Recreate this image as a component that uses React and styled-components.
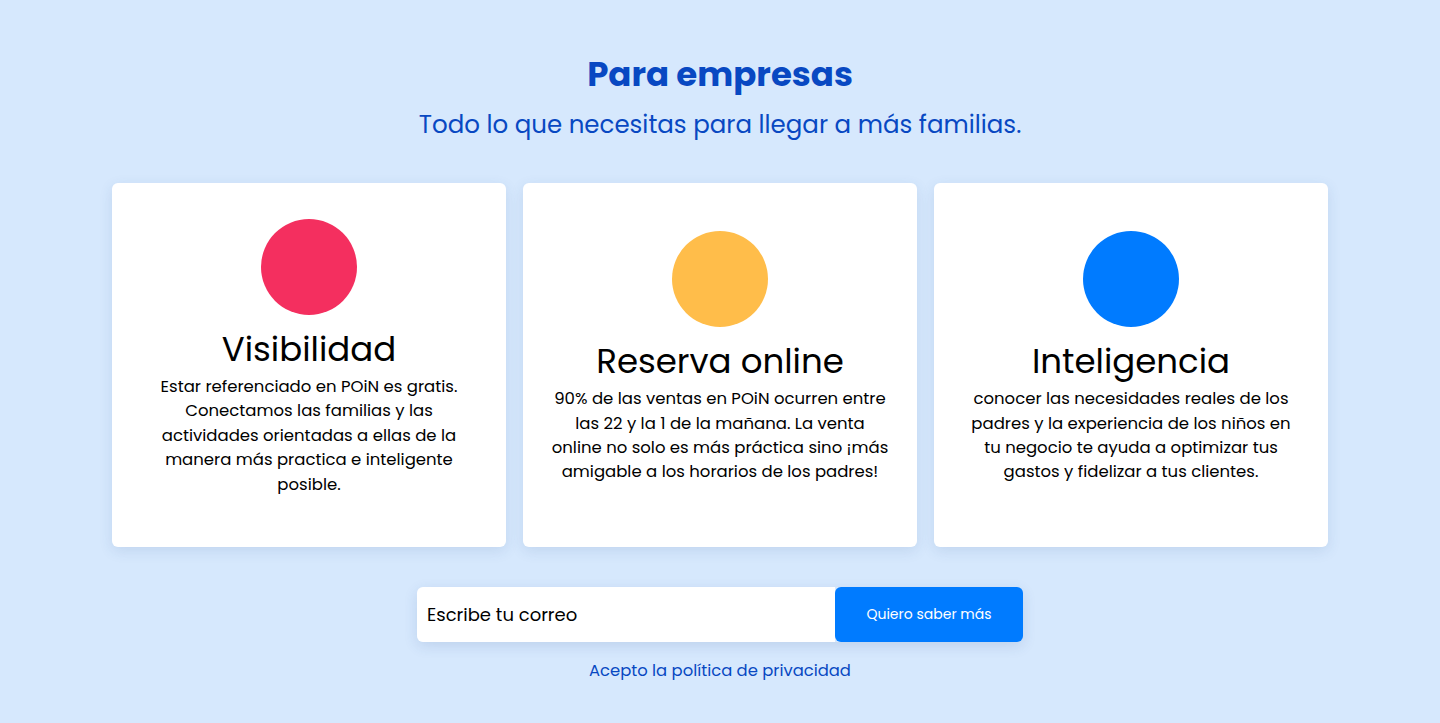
import styled, { createGlobalStyle } from "styled-components";

const GlobalStyle = createGlobalStyle`
    html, body {
        margin: 0;
        padding: 0;
        background: #d6e8fd;
    }
    * {
        box-sizing: border-box;
    }
    body {
        font-family: "Poppins", "DejaVu Sans", sans-serif;
    }
`

const Section = styled.section`
    min-height: 723px;
    padding-top: 52px;
    display: flex;
    flex-direction: column;
    align-items: center;
`

const Title = styled.h1`
    margin: 0;
    font-size: 34px;
    line-height: 44px;
    font-weight: 700;
    color: #0848c2;
`

const Subtitle = styled.p`
    margin: 12px 0 0;
    font-size: 24.5px;
    line-height: 34px;
    color: #0848c2;
`

const Cards = styled.div`
    margin-top: 41px;
    display: grid;
    grid-template-columns: repeat(3, 394px);
    gap: 17px;
`

const Card = styled.div`
    height: 364px;
    background: #fff;
    border-radius: 6px;
    box-shadow: 0 4px 14px rgba(40, 80, 140, 0.12);
    padding: 0 28px 14px;
    display: flex;
    flex-direction: column;
    align-items: center;
    justify-content: center;
    text-align: center;
`

const Dot = styled.div`
    width: 96px;
    height: 96px;
    border-radius: 50%;
    background: ${(p) => p.color};
`

const CardTitle = styled.h2`
    margin: 12px 0 0;
    font-size: 34px;
    line-height: 44px;
    font-weight: 400;
    color: #000;
`

const CardText = styled.p`
    margin: 4px 0 0;
    font-size: 16.5px;
    line-height: 24.4px;
    color: #000;
`

const Form = styled.form`
    margin-top: 40px;
    width: 606px;
    height: 55px;
    display: flex;
    border-radius: 6px;
    box-shadow: 0 4px 14px rgba(40, 80, 140, 0.14);
`

const Input = styled.input`
    flex: 1;
    border: none;
    outline: none;
    border-radius: 6px 0 0 6px;
    padding: 0 10px;
    font-family: inherit;
    font-size: 18px;
    color: #000;
    background: #fff;
    &::placeholder {
        color: #000;
    }
`

const Button = styled.button`
    width: 188px;
    border: none;
    border-radius: 6px;
    background: #007bff;
    color: #fff;
    font-family: inherit;
    font-size: 14px;
`

const Privacy = styled.a`
    margin-top: 17px;
    font-size: 16.4px;
    line-height: 24px;
    color: #0848c2;
    text-decoration: none;
`

const items = [
    {
        color: "#f42f5f",
        title: "Visibilidad",
        text: "Estar referenciado en POiN es gratis. Conectamos las familias y las actividades orientadas a ellas de la manera más practica e inteligente posible.",
    },
    {
        color: "#ffbd4a",
        title: "Reserva online",
        text: "90% de las ventas en POiN ocurren entre las 22 y la 1 de la mañana. La venta online no solo es más práctica sino ¡más amigable a los horarios de los padres!",
    },
    {
        color: "#007bff",
        title: "Inteligencia",
        text: "conocer las necesidades reales de los padres y la experiencia de los niños en tu negocio te ayuda a optimizar tus gastos y fidelizar a tus clientes.",
    },
]

const App = () => {
    return (
        <>
            <GlobalStyle />
            <Section>
                <Title>Para empresas</Title>
                <Subtitle>Todo lo que necesitas para llegar a más familias.</Subtitle>
                <Cards>
                    {items.map((item) => (
                        <Card key={item.title}>
                            <Dot color={item.color} />
                            <CardTitle>{item.title}</CardTitle>
                            <CardText>{item.text}</CardText>
                        </Card>
                    ))}
                </Cards>
                <Form onSubmit={(e) => e.preventDefault()}>
                    <Input type="email" placeholder="Escribe tu correo" />
                    <Button type="submit">Quiero saber más</Button>
                </Form>
                <Privacy href="#">Acepto la política de privacidad</Privacy>
            </Section>
        </>
    )
}

export default App;
